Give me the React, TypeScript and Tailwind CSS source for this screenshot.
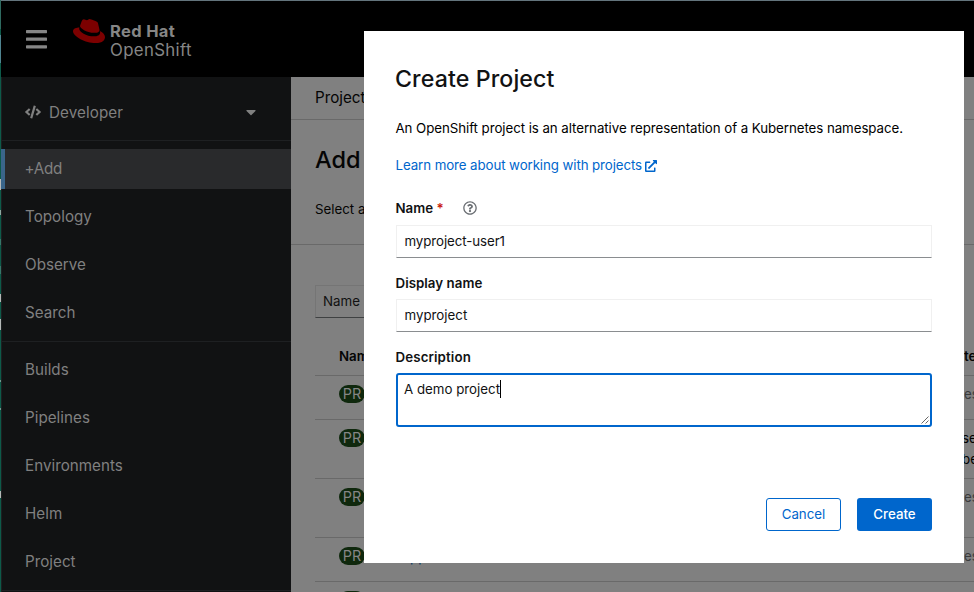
import { FaCaretDown, FaCode, FaExternalLinkAlt, FaRedhat, FaRegQuestionCircle } from 'react-icons/fa';

const primaryNav = ['Topology', 'Observe', 'Search'];
const secondaryNav = ['Builds', 'Pipelines', 'Environments', 'Helm', 'Project'];

function NavItem({ label }: { label: string }) {
  return <li className="flex h-10 items-center pl-[23px] tracking-[0.02px]">{label}</li>;
}

function Masthead() {
  return (
    <header className="flex h-[76px] shrink-0 items-start bg-black text-[#868686]">
      <svg className="ml-[25px] mt-[29px] h-[19px] w-[21px]" viewBox="0 0 21 19" fill="currentColor">
        <rect width="21" height="3.2" rx="0.6" />
        <rect y="7.6" width="21" height="3.2" rx="0.6" />
        <rect y="15.2" width="21" height="3.2" rx="0.6" />
      </svg>
      <FaRedhat className="ml-[26px] mt-[14px] size-[32px] text-[#7c0000]" />
      <div className="ml-[5px] mt-[21px] leading-[19px]">
        <div className="text-[16.5px] font-bold tracking-[0.35px]">Red Hat</div>
        <div className="text-[16.8px] tracking-[0.35px]">OpenShift</div>
      </div>
    </header>
  );
}

function Sidebar() {
  return (
    <nav className="w-[290px] shrink-0 border-l border-[#1d2021] bg-[#111213] text-[15.2px] text-[#808080]">
      <div className="flex h-[64px] items-center border-b border-[#1e2022] pl-[23px] pr-[32px] pt-[8px]">
        <FaCode className="mb-px size-4" />
        <span className="ml-2 mt-px tracking-[0.08px]">Developer</span>
        <FaCaretDown className="mb-px ml-auto size-4" />
      </div>
      <ul className="-ml-px mt-2">
        <li className="flex h-10 items-center border-l-4 border-[#3a658a] bg-[#292a2c] pl-[19.5px] tracking-[-0.3px]">+Add</li>
      </ul>
      <ul className="mt-2 flex flex-col gap-2 border-b border-[#1e2022] pb-2">
        {primaryNav.map((label) => (
          <NavItem key={label} label={label} />
        ))}
      </ul>
      <ul className="mt-2 flex flex-col gap-2 border-b border-[#1e2022] pb-2">
        {secondaryNav.map((label) => (
          <NavItem key={label} label={label} />
        ))}
      </ul>
    </nav>
  );
}

type Project = { height: string; name?: string; requester: string[]; muted: boolean };

const projects: Project[] = [
  { height: 'h-[44px]', requester: ['es'], muted: true },
  { height: 'h-[59px]', requester: ['se', 'be'], muted: false },
  { height: 'h-[59px]', requester: ['es'], muted: true },
  { height: 'h-[44px]', name: 'pp', requester: ['es'], muted: true },
  { height: 'h-[44px]', requester: [], muted: true },
];

function ProjectRow({ project }: { project: Project }) {
  return (
    <div className={`flex shrink-0 border-b border-[#696969] pl-6 pt-2 ${project.height}`}>
      <span className="mt-[1px] flex h-[18px] w-[26px] items-center justify-center rounded-full bg-[#0f280d] text-[14.4px] text-[#858585]">PR</span>
      <span className="ml-[45px] leading-[22px] text-[#00335f]">{project.name}</span>
      <div className={`ml-auto w-[10px] whitespace-nowrap leading-[21px] ${project.muted ? 'text-[#3a3b3c]' : 'text-black'}`}>
        {project.requester.map((line) => (
          <div key={line} className={project.muted ? '' : '-ml-[2px]'}>{line}</div>
        ))}
      </div>
    </div>
  );
}

function ProjectPage() {
  return (
    <main className="flex min-w-0 grow flex-col overflow-hidden bg-[#808080] text-[13.3px] text-[#050505]">
      <div className="flex h-[43px] shrink-0 items-center border-b border-[#696969] pl-6 text-[15.2px]">Project</div>
      <div className="h-[125px] shrink-0 border-b border-[#696969] pl-6">
        <h1 className="mt-[24px] text-[23.5px] font-medium leading-[31px]">Add</h1>
        <p className="mt-[24px] leading-[21px]">Select a</p>
      </div>
      <div className="ml-6 mt-10 flex h-[33px] w-[180px] shrink-0 items-center border border-[#757575] border-b-[#3f4142] pl-[7px] text-[#111]">Name</div>
      <div className="ml-6 flex h-[58px] shrink-0 items-end border-b border-[#696969] pb-[8px] pl-6 font-semibold leading-[21px]">
        <span>Name</span>
        <span className="ml-auto w-[10px] whitespace-nowrap">te</span>
      </div>
      <div className="ml-6 flex flex-col">
        {projects.map((project, i) => (
          <ProjectRow key={i} project={project} />
        ))}
      </div>
    </main>
  );
}

function CreateProjectDialog() {
  return (
    <section role="dialog" className="absolute left-[364px] top-[31px] flex h-[532px] w-[600px] flex-col bg-white px-8 text-[13.3px] text-[#111213]">
      <h2 className="-ml-px mt-[33px] text-[23.2px] font-medium leading-[31px] tracking-[0.1px]">Create Project</h2>
      <p className="-ml-[0.5px] mt-[23px] whitespace-nowrap leading-[21px] tracking-[-0.06px] text-black">
        An OpenShift project is an alternative representation of a Kubernetes namespace.
      </p>
      <a className="-ml-[0.5px] mt-4 flex items-center leading-[21px] tracking-[-0.09px] text-[#0066cc]">
        Learn more about working with projects
        <FaExternalLinkAlt className="ml-[3px] size-3" />
      </a>
      <div className="-ml-[0.5px] mt-[22px] flex h-[21px] items-center">
        <span className="font-semibold">Name</span>
        <span className="ml-[3.5px] font-semibold text-[#c9190b]">*</span>
        <FaRegQuestionCircle className="mb-px ml-[19px] size-[14px] text-[#6a6e73]" />
      </div>
      <div className="mt-[6px] flex h-[33px] items-center border border-[#f0f0f0] border-b-[#8a8d90] pl-[7.5px] tracking-[-0.08px]">myproject-user1</div>
      <div className="-ml-[0.5px] mt-[15px] font-semibold leading-[21px] tracking-[0.04px]">Display name</div>
      <div className="mt-[5px] flex h-[33px] items-center border border-[#f0f0f0] border-b-[#8a8d90] pl-[7.5px]">myproject</div>
      <div className="-ml-[0.5px] mt-[15px] font-semibold leading-[21px] tracking-[0.12px]">Description</div>
      <div className="mt-[5px] flex h-[54px] items-end justify-between rounded-[3px] border-2 border-[#0066cc] pb-px pl-[6px] pr-px">
        <div className="flex h-full items-start pt-[5px]">
          <span className="leading-[19px]">A demo project</span>
          <span className="h-[18px] w-px bg-black" />
        </div>
        <svg className="size-2" viewBox="0 0 8 8" stroke="#555" strokeWidth="0.9">
          <path d="M0.5 7.5 7.5 0.5M4.5 7.5 7.5 4.5" />
        </svg>
      </div>
      <div className="mt-[71px] flex justify-end gap-4">
        <button className="h-[33px] w-[75px] rounded-[3px] border border-[#0066cc] text-[#0066cc]">Cancel</button>
        <button className="h-[33px] w-[75px] rounded-[3px] bg-[#0066cc] font-medium text-white">Create</button>
      </div>
    </section>
  );
}

export default function App() {
  return (
    <div className="relative flex h-[592px] w-[974px] overflow-hidden font-['Inter','Liberation_Sans',sans-serif]">
      <div className="flex w-px shrink-0 flex-col bg-[#0d5a49]">
        <div className="h-[29px] bg-[#2f6a60]" />
        <div className="mt-[6px] h-[28px] bg-[#4f8490]" />
        <div className="mt-[116px] h-[11px] bg-[#b5b9b8]" />
        <div className="mt-[20px] h-[5px] bg-[#8fa8a0]" />
        <div className="mt-[24px] h-[6px] bg-[#37776a]" />
        <div className="mt-[21px] h-[8px] bg-[#37776a]" />
        <div className="mt-[20px] h-[8px] bg-[#b5b9b8]" />
        <div className="mt-[17px] h-[11px] bg-[#b5b9b8]" />
        <div className="mt-[50px] h-[2px] bg-[#6f9a90]" />
        <div className="mt-[26px] h-[2px] bg-[#6f9a90]" />
        <div className="mt-[81px] h-[7px] bg-[#b5b9b8]" />
      </div>
      <div className="flex min-w-0 grow flex-col border-t border-[#63747c]">
        <Masthead />
        <div className="flex min-h-0 grow">
          <Sidebar />
          <ProjectPage />
        </div>
      </div>
      <CreateProjectDialog />
    </div>
  );
}
